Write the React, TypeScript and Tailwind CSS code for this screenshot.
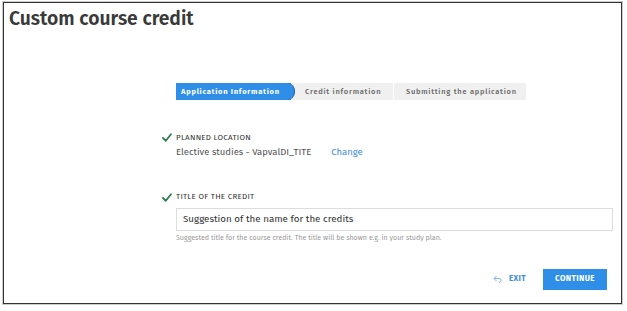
import React from 'react';

const font = { fontFamily: '"Fira Sans", "Noto Sans", "Open Sans", sans-serif' };

const Check = () => (
  <svg width="10" height="9" viewBox="0 0 10 9" className="shrink-0">
    <path d="M1 5 L3.8 7.8 L9 1.2" fill="none" stroke="#2e7d4f" strokeWidth="1.8" strokeLinecap="round" strokeLinejoin="round" />
  </svg>
);

const Steps = () => (
  <div className="flex h-[17px] text-[7.5px] tracking-[0.1em]">
    <div className="relative flex items-center bg-[#2f8fe8] pl-[5px] pr-[10px] font-bold text-white w-[115px]">
      Application Information
      <div className="absolute right-[-4px] top-0 h-[17px] w-[8px] rounded-r-full bg-[#2f8fe8] border-r border-[#1b5fa8]" />
    </div>
    <div className="flex items-center bg-[#f0f0f0] pl-[14px] pr-[10px] font-medium text-[#666] w-[102px]">Credit information</div>
    <div className="flex items-center bg-[#f0f0f0] pl-[12px] font-medium text-[#666] w-[133px] border-l border-white">
      Submitting the application
    </div>
  </div>
);

export default function App() {
  return (
    <div className="w-[627px] h-[311px] bg-white pt-[2px] pl-[3px]" style={font}>
      <div className="w-[619px] h-[302px] border border-[#333] shadow-[0_0_0_1px_#ccc] flex flex-col">
        <h1 className="text-[19.3px] font-semibold text-[#3a3a3a] leading-none pl-[5px] pt-[6px]">Custom course credit</h1>
        <div className="pl-[172px] pt-[55px]">
          <Steps />
        </div>
        <div className="pl-[158px] pt-[33px] flex flex-col">
          <div className="flex items-center gap-[4px]">
            <Check />
            <span className="text-[8px] font-normal tracking-[0.03em] text-[#333] uppercase leading-none">Planned location</span>
          </div>
          <div className="pl-[14px] pt-[6px] flex text-[9.5px] text-[#555] leading-none">
            <span>Elective studies - VapvalDI_TITE</span>
            <span className="ml-[20px] text-[#3b8fdc]">Change</span>
          </div>
          <div className="flex items-center gap-[4px] pt-[35px]">
            <Check />
            <span className="text-[8px] font-normal tracking-[0.03em] text-[#333] uppercase leading-none">Title of the credit</span>
          </div>
          <div className="pl-[14px] pt-[6px]">
            <div className="w-[437px] h-[23px] border border-[#ddd] flex items-center px-[6px] text-[9.8px] font-normal text-[#333]">
              Suggestion of the name for the credits
            </div>
            <div className="pt-[3px] text-[7.1px] text-[#999] leading-none">
              Suggested title for the course credit. The title will be shown e.g. in your study plan.
            </div>
          </div>
        </div>
        <div className="flex justify-end items-center pr-[14px] pt-[28px] gap-[17px]">
          <span className="flex items-center gap-[7px] text-[8px] font-bold tracking-[0.05em] text-[#3b8fdc]">
            <svg width="9" height="8" viewBox="0 0 9 8">
              <path d="M3.5 1 L1 3.5 L3.5 6 M1 3.5 H6 A2 2 0 0 1 6 7.5" fill="none" stroke="#7fb4e6" strokeWidth="1" />
            </svg>
            EXIT
          </span>
          <button className="h-[21px] w-[64px] bg-[#2f8fe8] text-white text-[8px] font-bold tracking-[0.05em]">CONTINUE</button>
        </div>
      </div>
    </div>
  );
}
